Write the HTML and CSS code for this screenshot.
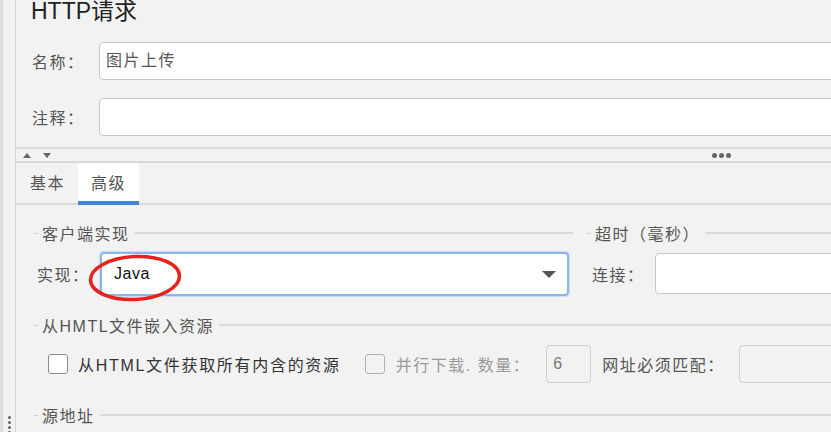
FILE: index.html
```html
<!DOCTYPE html>
<html lang="zh-CN">
<head>
  <meta charset="UTF-8" />
  <title>HTTP请求</title>
  <link rel="stylesheet" href="styles.css">
</head>
<body>
  <div class="app">
    <!-- left splitter strip -->
    <div class="side">
      <span class="dot"></span><span class="dot"></span><span class="dot"></span><span class="dot"></span>
    </div>

    <div class="main">
      <div class="head">
        <h1 class="title">HTTP请求</h1>
        <div class="form">
          <label class="lbl">名称：</label>
          <div class="field">图片上传</div>
          <label class="lbl">注释：</label>
          <div class="field"></div>
        </div>
      </div>

      <div class="split">
        <div class="arrows"><span class="tri up"></span><span class="tri down"></span></div>
        <div class="grip"><span></span><span></span><span></span></div>
      </div>

      <div class="tabs">
        <div class="tab">基本</div>
        <div class="tab active">高级</div>
      </div>

      <div class="panel">
        <div class="cols">
          <div class="group impl">
            <div class="legend"><span class="dash"></span><span class="ltext">客户端实现</span><span class="rule"></span></div>
            <div class="row">
              <label class="lbl">实现：</label>
              <div class="select">
                <span class="val">Java</span>
                <span class="caret"></span>
              </div>
            </div>
          </div>
          <div class="group timeout">
            <div class="legend"><span class="dash"></span><span class="ltext">超时（毫秒）</span><span class="rule"></span></div>
            <div class="row">
              <label class="lbl">连接：</label>
              <div class="field"></div>
            </div>
          </div>
        </div>

        <div class="group embed">
          <div class="legend"><span class="dash"></span><span class="ltext">从HMTL文件嵌入资源</span><span class="rule"></span></div>
          <div class="row checks">
            <span class="box"></span>
            <span class="ctext">从HTML文件获取所有内含的资源</span>
            <span class="box off"></span>
            <span class="ctext off">并行下载. 数量：</span>
            <div class="field small off">6</div>
            <span class="ctext url">网址必须匹配：</span>
            <div class="field off grow"></div>
          </div>
        </div>

        <div class="group">
          <div class="legend"><span class="dash"></span><span class="ltext">源地址</span><span class="rule"></span></div>
        </div>
      </div>
    </div>

    <!-- red mark drawn over the select -->
    <svg class="mark" width="100" height="54" viewBox="0 0 100 54">
      <ellipse cx="48" cy="26" rx="44.5" ry="21.5" fill="none" stroke="#e5231c" stroke-width="3.5" transform="rotate(-3 48 26)"/>
    </svg>
  </div>
</body>
</html>
```

FILE: styles.css
```css
* {
  margin: 0;
  padding: 0;
  box-sizing: border-box;
}

body {
  font-family: "Liberation Sans", "Noto Sans CJK SC", sans-serif;
  font-size: 16px;
  color: #444;
  background-color: #f2f2f2;
  overflow: hidden;
}

.app {
  position: relative;
  display: flex;
  width: 831px;
  height: 432px;
  overflow: hidden;
}

/* Left strip */
.side {
  width: 16px;
  flex: none;
  border-left: 3px solid #dedede;
  border-right: 1px solid #d4d4d4;
  display: flex;
  flex-direction: column;
  justify-content: flex-end;
  align-items: center;
  gap: 2px;
  margin-bottom: -2px;
}

.dot {
  width: 3px;
  height: 3px;
  border-radius: 50%;
  background-color: #666;
}

.main {
  flex: 1;
  display: flex;
  flex-direction: column;
  min-width: 0;
}

/* Top area */
.head {
  padding: 0 0 11px 15px;
}

.title {
  font-size: 23px;
  font-weight: normal;
  line-height: 22px;
  color: #222;
  height: 42px;
}

.form {
  display: grid;
  grid-template-columns: 67px 1fr;
  row-gap: 18px;
  align-items: center;
  padding-left: 1px;
  margin-right: -12px;
}

.lbl {
  letter-spacing: 1.5px;
  color: #555;
}

.field {
  height: 38px;
  background-color: #fff;
  border: 1px solid #c8c8c8;
  border-radius: 4px;
  padding: 0 6px;
  line-height: 36px;
  letter-spacing: 1.5px;
  color: #555;
}

/* Splitter */
.split {
  height: 16px;
  border-top: 2px solid #dadada;
  border-bottom: 2px solid #dadada;
  display: flex;
  align-items: center;
  justify-content: space-between;
  padding: 0 100px 0 7px;
}

.arrows {
  display: flex;
  gap: 12px;
}

.tri {
  width: 0;
  height: 0;
  border-left: 4px solid transparent;
  border-right: 4px solid transparent;
}

.tri.up {
  border-bottom: 5px solid #666;
}

.tri.down {
  border-top: 5px solid #666;
}

.grip {
  display: flex;
  gap: 2px;
}

.grip span {
  width: 5px;
  height: 5px;
  border-radius: 50%;
  background-color: #666;
}

/* Tabs */
.tabs {
  display: flex;
  height: 42px;
  border-bottom: 2px solid #dadada;
  padding-left: 1px;
}

.tab {
  width: 61px;
  display: flex;
  align-items: center;
  justify-content: center;
  letter-spacing: 1.5px;
  color: #555;
  padding-bottom: 2px;
}

.tab.active {
  background-color: #fff;
  border-bottom: 4px solid #3f86d4;
  padding-bottom: 0;
  margin-bottom: -2px;
}

/* Advanced panel */
.panel {
  padding: 15px 0 0 18px;
}

.cols {
  display: flex;
  gap: 14px;
}

.impl {
  width: 539px;
  flex: none;
}

.timeout {
  flex: 1;
  margin-right: -12px;
}

.legend {
  display: flex;
  align-items: center;
  height: 26px;
}

.dash {
  width: 4px;
  height: 1px;
  background-color: #cfcfcf;
}

.ltext {
  padding: 0 5px 0 4px;
  letter-spacing: 1.5px;
  color: #555;
}

.rule {
  flex: 1;
  height: 2px;
  background-color: #dadada;
}

.row {
  display: flex;
  align-items: center;
  margin-top: 6px;
  padding-left: 3px;
}

.row .lbl {
  width: 63px;
  flex: none;
}

.row .field {
  flex: 1;
  height: 41px;
}

.timeout .row {
  padding-left: 5px;
  margin-top: 7px;
}

.select {
  flex: 1;
  height: 44px;
  margin-right: 4px;
  background-color: #fff;
  border: 2px solid #8cb6ea;
  border-radius: 4px;
  box-shadow: 0 0 1px 1px #c7dcf5;
  display: flex;
  align-items: center;
  justify-content: space-between;
  padding: 0 11px 0 12px;
}

.val {
  color: #111;
  letter-spacing: 0.5px;
}

.caret {
  width: 0;
  height: 0;
  border-left: 7px solid transparent;
  border-right: 7px solid transparent;
  border-top: 7px solid #555;
}

.embed {
  margin-top: 16px;
  margin-right: -12px;
}

.checks {
  margin-top: 7px;
  padding-left: 14px;
}

.box {
  width: 20px;
  height: 20px;
  flex: none;
  border: 1px solid #8a8a8a;
  border-radius: 3px;
  background-color: #fff;
}

.box.off {
  border-color: #b0b0b0;
  background-color: #f2f2f2;
  margin-left: 24px;
}

.ctext {
  margin-left: 10px;
  letter-spacing: 1.7px;
  color: #333;
}

.ctext.off {
  color: #9a9a9a;
  margin-left: 11px;
  letter-spacing: 1.5px;
}

.checks .field.small {
  flex: none;
  width: 45px;
  height: 38px;
  margin-left: 16px;
}

.checks .field.off {
  background-color: #f2f2f2;
  border-color: #d0d0d0;
  color: #777;
}

.ctext.url {
  margin-left: 11px;
  margin-right: 14px;
  color: #555;
  letter-spacing: 1.5px;
}

.checks .field.grow {
  flex: 1;
  height: 38px;
}

.embed + .group {
  margin-top: 19px;
}

/* Red annotation over the select */
.mark {
  position: absolute;
  left: 87px;
  top: 252px;
}
```
